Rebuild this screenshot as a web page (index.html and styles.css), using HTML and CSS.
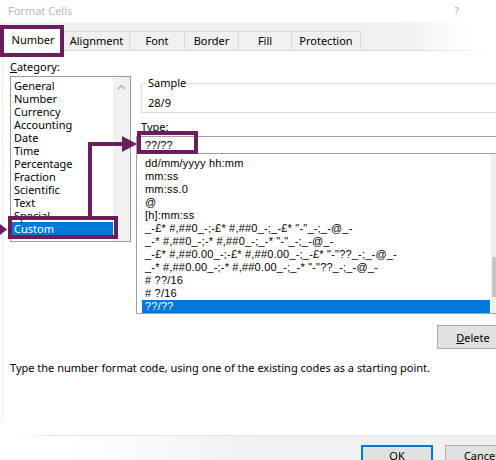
FILE: index.html
```html
<!DOCTYPE html>
<html>
<head>
<meta charset="utf-8">
<link rel="stylesheet" href="styles.css">
</head>
<body>
<div class="dialog">
  <div class="titlebar"><span class="title">Format Cells</span><span class="help">?</span></div>
  <div class="tabstrip">
    <div class="tab active t-number">Number</div>
    <div class="tab t-align">Alignment</div>
    <div class="tab t-font">Font</div>
    <div class="tab t-border">Border</div>
    <div class="tab t-fill">Fill</div>
    <div class="tab t-prot">Protection</div>
  </div>
  <div class="body">
    <div class="main">
      <div class="cat-col">
        <div class="label"><u>C</u>ategory:</div>
        <div class="catlist">
          <ul class="items">
            <li>General</li>
            <li>Number</li>
            <li>Currency</li>
            <li>Accounting</li>
            <li>Date</li>
            <li>Time</li>
            <li>Percentage</li>
            <li>Fraction</li>
            <li>Scientific</li>
            <li>Text</li>
            <li>Special</li>
            <li class="sel">Custom</li>
          </ul>
          <div class="vscroll">
            <svg class="chev" width="9" height="6" viewBox="0 0 9 6"><path d="M1 5 L4.5 1.5 L8 5" fill="none" stroke="#a6a6a6" stroke-width="1.2"/></svg>
          </div>
        </div>
      </div>
      <div class="right-col">
        <fieldset class="sample">
          <legend>Sample</legend>
          <div class="sample-val">28/9</div>
        </fieldset>
        <div class="label type-label">Type:</div>
        <div class="typebox">??/??</div>
        <div class="fmtlist">
          <ul class="fitems">
            <li>dd/mm/yyyy hh:mm</li>
            <li>mm:ss</li>
            <li>mm:ss.0</li>
            <li>@</li>
            <li>[h]:mm:ss</li>
            <li>_-£* #,##0_-;-£* #,##0_-;_-£* "-"_-;_-@_-</li>
            <li>_-* #,##0_-;-* #,##0_-;_-* "-"_-;_-@_-</li>
            <li>_-£* #,##0.00_-;-£* #,##0.00_-;_-£* "-"??_-;_-@_-</li>
            <li>_-* #,##0.00_-;-* #,##0.00_-;_-* "-"??_-;_-@_-</li>
            <li># ??/16</li>
            <li># ?/16</li>
            <li class="sel">??/??</li>
          </ul>
          <div class="fscroll"><div class="thumb"></div></div>
        </div>
        <div class="btnrow"><button class="btn"><u>D</u>elete</button></div>
      </div>
    </div>
    <p class="desc">Type the number format code, using one of the existing codes as a starting point.</p>
  </div>
  <div class="footer">
    <button class="btn ok">OK</button>
    <button class="btn">Cancel</button>
  </div>
</div>
<svg class="annot" width="496" height="460" viewBox="0 0 496 460">
  <g fill="none" stroke="#6b1e5e" stroke-width="4">
    <rect x="2" y="27" width="60" height="28"/>
    <rect x="10" y="218" width="106" height="19"/>
    <rect x="139" y="133" width="57" height="19"/>
    <polyline points="90,216 90,144 124,144" stroke-linejoin="miter"/>
  </g>
  <g fill="#6b1e5e">
    <polygon points="122,136 137,144 122,152"/>
    <polygon points="0,224 7,229.5 0,235"/>
  </g>
</svg>
</body>
</html>
```
FILE: styles.css
```css
* { box-sizing: border-box; margin: 0; padding: 0; }
html, body { width: 496px; height: 460px; overflow: hidden; background: #fff; }
body {
  position: relative;
  font-family: "Noto Sans", "Open Sans", sans-serif;
  font-size: 11px;
  color: #000;
}
u { text-decoration: underline; text-underline-offset: 1px; }

.dialog { width: 520px; height: 460px; display: flex; flex-direction: column; }

.titlebar {
  width: 496px; height: 22px;
  display: flex; align-items: center;
  padding: 0 37px 2px 8px;
  color: #bdb5bd; font-size: 11px;
}
.help { margin-left: auto; color: #b4b4b4; }

.tabstrip {
  height: 29px;
  display: flex; align-items: flex-end;
  padding: 0 0 1px 2px;
  background:
    linear-gradient(to right, #d9d9d9 420px, #ffffff 490px) left bottom / 100% 1px no-repeat,
    linear-gradient(to right, #f0f0f0 400px, #ffffff 468px);
}
.tab {
  height: 19px;
  display: flex; align-items: center; justify-content: center;
  border: 1px solid #d9d9d9; border-bottom: none;
  margin-left: -1px;
  padding-bottom: 1px;
}
.tab:first-child { margin-left: 0; }
.tab.active { height: 23px; background: #fff; margin-bottom: -1px; position: relative; }
.t-number { width: 62px; }
.t-align { width: 67px; }
.t-font { width: 56px; }
.t-border { width: 55px; }
.t-fill { width: 54px; }
.t-prot { width: 70px; }

.body {
  height: 384px;
  display: flex; flex-direction: column;
  padding: 9px 0 0 10px;
  background: linear-gradient(#ececec, #ececec) 2px 0 / 1px 370px no-repeat;
}
.main { display: flex; }
.label { line-height: 14px; height: 14px; }

.cat-col { width: 121px; }
.catlist {
  margin-top: 2px;
  height: 166px;
  border: 1px solid #9c9c9c;
  display: flex;
}
.items { list-style: none; flex: 1; padding: 2px 0 0 1px; }
.items li { height: 13px; line-height: 13px; padding-left: 2px; white-space: nowrap; }
.items li.sel { background: #0078d7; color: #fff; }
.vscroll { width: 17px; background: #f0f0f0; display: flex; justify-content: center; padding-top: 7px; }
.chev { display: block; }

.right-col { width: 373px; margin-left: 5px; margin-top: 16px; }
.sample {
  margin-left: 5px;
  border: 1px solid #dcdcdc;
  padding: 6px 5px 2px 5px;
}
.sample legend { padding: 0 1px; line-height: 14px; }
.sample-val { line-height: 14px; margin-left: 1px; }
.type-label { margin: 7px 0 0 5px; }

.typebox {
  margin-top: 2px;
  height: 18px;
  border: 1px solid #a0a0a0;
  padding-left: 8px;
  line-height: 16px;
  font-family: "Liberation Sans", Arial, sans-serif;
  font-size: 11px;
}
.fmtlist {
  margin-top: -1px;
  height: 161px;
  border: 1px solid #a0a0a0;
  display: flex;
  font-family: "Liberation Sans", Arial, sans-serif;
  font-size: 11px;
  letter-spacing: 0.2px;
}
.fitems { list-style: none; flex: 1; padding: 3px 1px 0 5px; min-width: 0; }
.fitems li { height: 13px; line-height: 13px; padding-left: 3px; white-space: nowrap; overflow: hidden; }
.fitems li.sel { background: #0078d7; color: #fff; }
.fscroll { width: 17px; background: #f0f0f0; padding-top: 103px; }
.thumb { height: 40px; margin: 0 1px; background: #c6c6c6; }

.btnrow { display: flex; justify-content: flex-end; margin-top: 11px; }
.btn {
  width: 72px; height: 24px;
  background: #e1e1e1; border: 1px solid #adadad;
  font-family: inherit; font-size: 11px; color: #000;
  padding-bottom: 3px;
}
.desc { margin-top: 12px; line-height: 14px; }

.footer {
  height: 25px;
  display: flex; gap: 12px;
  padding: 10px 0 0 361px;
  background:
    linear-gradient(to right, rgba(227,227,227,0) 15px, #e3e3e3 60px) left top / 100% 1px no-repeat,
    linear-gradient(to right, #ffffff 70px, #f0f0f0 260px);
}
.btnrow .btn { padding-bottom: 0; }
.btn.ok { border: 2px solid #0078d7; }

.annot { position: absolute; left: 0; top: 0; pointer-events: none; }
```
